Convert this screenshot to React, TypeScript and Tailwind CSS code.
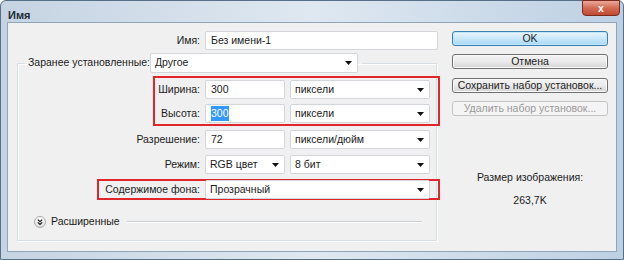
import React from "react";

const Arrow = () => (
  <svg width="7" height="4" viewBox="0 0 7 4" className="shrink-0">
    <polygon points="0,0 7,0 3.5,4" fill="#111" />
  </svg>
);

const Field = ({ children, className = "" }: { children: React.ReactNode; className?: string }) => (
  <div className={`flex items-center bg-white border border-[#d3d6db] rounded-[2px] pl-[5px] h-[19px] ${className}`}>
    {children}
  </div>
);

const Select = ({ value, className = "" }: { value: string; className?: string }) => (
  <div
    className={`flex items-center justify-between bg-white border border-[#d3d6db] rounded-[2px] pl-[4px] pr-[5px] h-[19px] ${className}`}
  >
    <span>{value}</span>
    <Arrow />
  </div>
);

interface RowProps {
  label: string;
  input: React.ReactNode;
  unit?: string;
  className?: string;
}

const Row = ({ label, input, unit, className = "" }: RowProps) => (
  <div className={`flex items-center ${className}`}>
    <div className="flex-1 text-right pr-[5px] whitespace-nowrap">{label}</div>
    {input}
    {unit && <Select value={unit} className="ml-[5px] w-[140px]" />}
  </div>
);

const Button = ({
  label,
  primary,
  disabled,
  className = "",
}: {
  label: string;
  primary?: boolean;
  disabled?: boolean;
  className?: string;
}) => (
  <div
    className={`h-[15px] flex items-center justify-center rounded-[3px] border leading-[13px] ${
      primary
        ? "border-[#3c7fb1] bg-gradient-to-b from-[#eaf6fd] to-[#a7d9f5] shadow-[inset_0_0_0_1px_#bfe6fb]"
        : disabled
        ? "border-[#c2c4c6] bg-[#f4f4f4] text-[#9a9a9a]"
        : "border-[#707070] bg-gradient-to-b from-[#f2f2f2] via-[#ebebeb] to-[#d4d4d4] shadow-[inset_0_0_0_1px_#fbfbfb]"
    } ${className}`}
  >
    {label}
  </div>
);

const ExpandIcon = () => (
  <svg width="12" height="12" viewBox="0 0 12 12" className="shrink-0">
    <defs>
      <linearGradient id="eg" x1="0" y1="0" x2="0" y2="1">
        <stop offset="0" stopColor="#ffffff" />
        <stop offset="1" stopColor="#dcdcdc" />
      </linearGradient>
    </defs>
    <circle cx="6" cy="6" r="5.5" fill="url(#eg)" stroke="#a9a9a9" />
    <path d="M3.8 3.6 L6 5.6 L8.2 3.6 M3.8 6.4 L6 8.4 L8.2 6.4" fill="none" stroke="#222" strokeWidth="1.2" />
  </svg>
);

export default function App() {
  return (
    <div className="w-[624px] h-[260px] overflow-hidden font-['Liberation_Sans',Arial,sans-serif] text-[10.5px] text-[#1b1b1b] bg-white">
      <div className="w-[624px] h-[260px] flex flex-col border border-[#56708a] rounded-t-[6px] bg-gradient-to-r from-[#c5d3e2] via-[#dfe8f1] to-[#bdd0e3]">
        <div className="h-[21px] flex items-start justify-between pl-[7px] pr-[3px] shrink-0">
          <span className="mt-[6px] font-bold text-[11px] text-[#1e2a36]">Имя</span>
          <div className="w-[38px] h-[16px] -mt-[1px] flex items-center justify-center rounded-b-[4px] border border-[#7b2a1d] bg-gradient-to-b from-[#e9a898] via-[#d36a54] to-[#c24a33] text-white font-bold leading-none">
            x
          </div>
        </div>

        <div className="mx-[6px] h-[230px] border border-[#8fa5ba] bg-[#f0f0f0] flex shrink-0">
          <div className="w-[437px] shrink-0">
            <Row
              className="mt-[8px] pr-[7px]"
              label="Имя:"
              input={<Field className="w-[233px]">Без имени-1</Field>}
            />

            <fieldset className="mt-[3px] ml-[9px] w-[420px] border border-[#d5dfe5] pl-[7px] pr-[6px] pb-[12px] shadow-[inset_1px_1px_0_#ffffff,1px_1px_0_#ffffff]">
              <legend className="px-[3px] pr-[4px]">
                <div className="flex items-center">
                  <span className="w-[122px] whitespace-nowrap">Заранее установленные:</span>
                  <Select value="Другое" className="w-[208px] h-[20px]" />
                </div>
              </legend>

              <div className="-ml-[7px]">
                <div className="mt-[3px] ml-[135px] -mr-[10px] border-2 border-[#e0252b] pt-[2px] pb-[1px] pr-[8px]">
                  <Row label="Ширина:" input={<Field className="w-[80px]">300</Field>} unit="пиксели" />
                  <Row
                    className="mt-[5px]"
                    label="Высота:"
                    input={
                      <Field className="w-[80px]">
                        <span className="bg-[#3399ff] text-white">300</span>
                      </Field>
                    }
                    unit="пиксели"
                  />
                </div>

                <Row
                  className="mt-[4px]"
                  label="Разрешение:"
                  input={<Field className="w-[80px]">72</Field>}
                  unit="пиксели/дюйм"
                />
                <Row
                  className="mt-[6px]"
                  label="Режим:"
                  input={<Select value="RGB цвет" className="w-[80px]" />}
                  unit="8 бит"
                />

                <div className="mt-[5px] ml-[79px] -mr-[10px] h-[21px] border-2 border-[#e0252b] pr-[8px] flex items-center">
                  <div className="flex-1 text-right pr-[5px] whitespace-nowrap">Содержимое фона:</div>
                  <Select value="Прозрачный" className="w-[225px] h-[17px]" />
                </div>

                <div className="mt-[16px] ml-[16px] flex items-center h-[12px]">
                  <ExpandIcon />
                  <span className="ml-[5px] whitespace-nowrap">Расширенные</span>
                  <div className="flex-1 ml-[7px] mr-[8px] h-[2px] border-t border-[#c9ced3] border-b border-b-white" />
                </div>
              </div>
            </fieldset>
          </div>

          <div className="ml-[7px] w-[156px] pt-[8px] flex flex-col">
            <Button primary label="OK" />
            <Button label="Отмена" className="mt-[8px]" />
            <Button label="Сохранить набор установок..." className="mt-[9px]" />
            <Button disabled label="Удалить набор установок..." className="mt-[8px]" />
            <div className="mt-[55px] text-center leading-[13px]">Размер изображения:</div>
            <div className="mt-[10px] text-center leading-[13px]">263,7K</div>
          </div>
        </div>
      </div>
    </div>
  );
}
